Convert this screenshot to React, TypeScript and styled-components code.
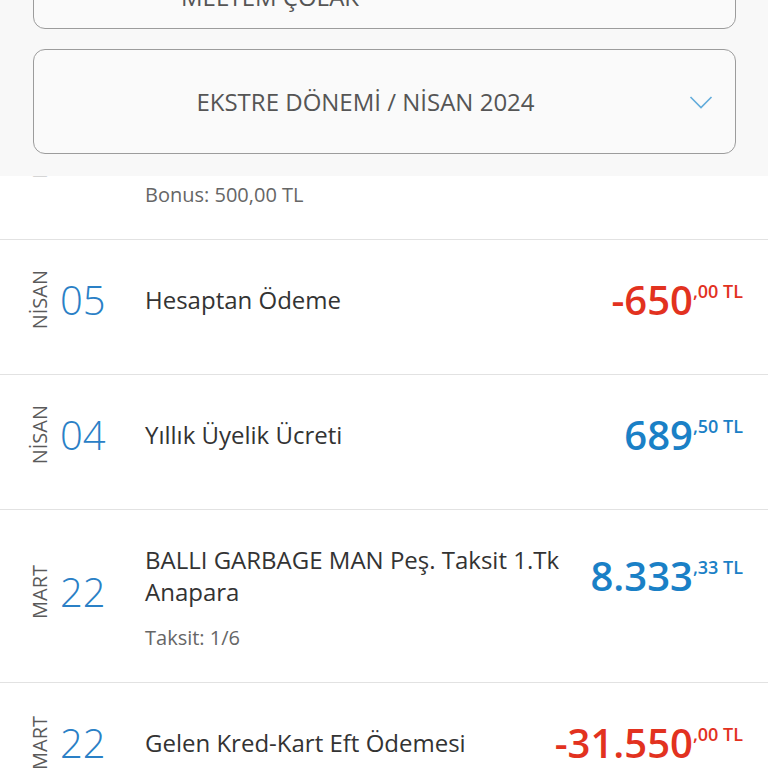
import styled, { createGlobalStyle } from "styled-components";

const GlobalStyle = createGlobalStyle`
  html, body {
    margin: 0;
    padding: 0;
    background: #ffffff;
    font-family: "Open Sans", "Noto Sans", sans-serif;
  }
`;

const Page = styled.div`
  width: 768px;
  height: 768px;
  overflow: hidden;
  display: flex;
  flex-direction: column;
  background: #ffffff;
`;

const Header = styled.div`
  background: #f8f8f8;
  display: flex;
  flex-direction: column;
  gap: 20px;
  padding: 0 32px 20px 33px;
  height: 176px;
  box-sizing: border-box;
  overflow: hidden;
  flex-shrink: 0;
`;

const NameCard = styled.div`
  margin-top: -61px;
  height: 90px;
  box-sizing: border-box;
  border: 1px solid #9c9c9c;
  border-radius: 12px;
  background: #fafafa;
  display: flex;
  align-items: flex-end;
  padding: 0 0 15px 147px;
  font-size: 24px;
  color: #555555;
  text-transform: uppercase;
`;

const PeriodSelect = styled.div`
  height: 105px;
  box-sizing: border-box;
  border: 1px solid #9c9c9c;
  border-radius: 12px;
  background: #fafafa;
  display: flex;
  align-items: center;
  padding: 0 14px 0 16px;
`;

const PeriodLabel = styled.div`
  flex: 1;
  text-align: center;
  font-size: 24px;
  color: #555555;
`;

const Chevron = styled.div`
  width: 40px;
  display: flex;
  justify-content: center;
`;

const List = styled.div`
  display: flex;
  flex-direction: column;
`;

const Clipped = styled.div`
  height: 64px;
  overflow: hidden;
  display: flex;
  flex-direction: column;
  justify-content: flex-end;
  flex-shrink: 0;
`;

const Row = styled.div<{ $withMeta?: boolean }>`
  display: flex;
  align-items: center;
  min-height: 135px;
  box-sizing: border-box;
  padding: ${(p) => (p.$withMeta ? "34px 25px 31px 30px" : "26px 25px 40px 30px")};
  border-bottom: 1px solid #e2e2e2;
  flex-shrink: 0;
`;

const DateBlock = styled.div<{ $withMeta?: boolean }>`
  width: 115px;
  flex-shrink: 0;
  display: flex;
  align-items: center;
  gap: 10px;
  margin-bottom: ${(p) => (p.$withMeta ? "12px" : "0")};
`;

const Month = styled.span`
  writing-mode: vertical-rl;
  transform: rotate(180deg);
  font-size: 20px;
  color: #5a5a5a;
  line-height: 20px;
`;

const Day = styled.span`
  font-size: 40px;
  font-weight: 300;
  color: #2a80c6;
  line-height: 1;
`;

const Body = styled.div`
  flex: 1;
  display: flex;
  flex-direction: column;
`;

const TitleLine = styled.div`
  display: flex;
  align-items: center;
  gap: 12px;
`;

const Title = styled.div`
  flex: 1;
  font-size: 24px;
  line-height: 32px;
  color: #333333;
`;

const Meta = styled.div`
  margin-top: 17px;
  font-size: 20px;
  line-height: 26px;
  color: #666666;
`;

const Amount = styled.div<{ $negative?: boolean }>`
  display: flex;
  align-items: flex-start;
  flex-shrink: 0;
  font-weight: 600;
  color: ${(p) => (p.$negative ? "#e2321f" : "#1a80c6")};
`;

const Whole = styled.span`
  font-size: 40px;
  line-height: 42px;
`;

const Fraction = styled.span`
  font-size: 18px;
  line-height: 20px;
  margin-top: 2px;
`;

type Item = {
  month: string;
  day: string;
  title: string;
  whole: string;
  fraction: string;
  negative?: boolean;
  meta?: string;
};

const items: Item[] = [
  { month: "NİSAN", day: "05", title: "Hesaptan Ödeme", whole: "-650", fraction: ",00 TL", negative: true },
  { month: "NİSAN", day: "04", title: "Yıllık Üyelik Ücreti", whole: "689", fraction: ",50 TL" },
  {
    month: "MART",
    day: "22",
    title: "BALLI GARBAGE MAN Peş. Taksit 1.Tk Anapara",
    whole: "8.333",
    fraction: ",33 TL",
    meta: "Taksit: 1/6",
  },
  { month: "MART", day: "22", title: "Gelen Kred-Kart Eft Ödemesi", whole: "-31.550", fraction: ",00 TL", negative: true },
];

const Transaction = ({ item }: { item: Item }) => (
  <Row $withMeta={!!item.meta}>
    <DateBlock $withMeta={!!item.meta}>
      <Month>{item.month}</Month>
      <Day>{item.day}</Day>
    </DateBlock>
    <Body>
      <TitleLine>
        <Title>{item.title}</Title>
        <Amount $negative={item.negative}>
          <Whole>{item.whole}</Whole>
          <Fraction>{item.fraction}</Fraction>
        </Amount>
      </TitleLine>
      {item.meta && <Meta>{item.meta}</Meta>}
    </Body>
  </Row>
);

const App = () => {
  return (
    <Page>
      <GlobalStyle />
      <Header>
        <NameCard>MELTEM ÇOLAK</NameCard>
        <PeriodSelect>
          <PeriodLabel>EKSTRE DÖNEMİ / NİSAN 2024</PeriodLabel>
          <Chevron>
            <svg width="24" height="14" viewBox="0 0 24 14" fill="none">
              <path d="M1.5 2 L12 12.5 L22.5 2" stroke="#62acdb" strokeWidth="1.6" />
            </svg>
          </Chevron>
        </PeriodSelect>
      </Header>
      <List>
        <Clipped>
          <Transaction
            item={{
              month: "NİSAN",
              day: "06",
              title: "MİGROS TİCARET A.Ş. İSTANBUL Bonus Kazanım Kampanyası",
              whole: "1.250",
              fraction: ",00 TL",
              meta: "Bonus: 500,00 TL",
            }}
          />
        </Clipped>
        {items.map((item, i) => (
          <Transaction key={i} item={item} />
        ))}
      </List>
    </Page>
  );
};

export default App;
